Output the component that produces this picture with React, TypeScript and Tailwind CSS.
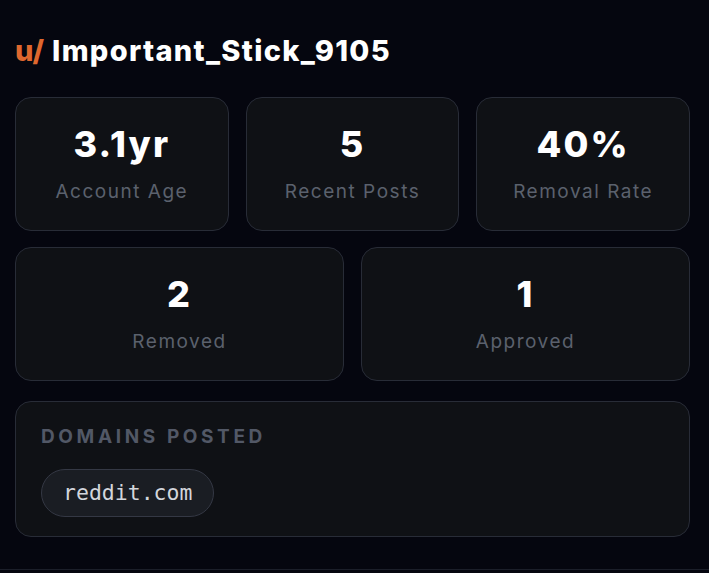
const stats = [
  { value: '3.1yr', label: 'Account Age' },
  { value: '5', label: 'Recent Posts' },
  { value: '40%', label: 'Removal Rate' },
];

const outcomes = [
  { value: '2', label: 'Removed' },
  { value: '1', label: 'Approved' },
];

function StatCard({ value, label }: { value: string; label: string }) {
  return (
    <div className="h-[134px] rounded-2xl border border-[#282c37] bg-[#0f1115] flex flex-col items-center justify-center">
      <p className="text-[36px] leading-[40px] font-extrabold tracking-[0.06em] text-white">{value}</p>
      <p className="mt-4 text-[19px] leading-[24px] tracking-[0.08em] text-[#5b616d]">{label}</p>
    </div>
  );
}

export default function App() {
  return (
    <div
      className="min-h-[573px] bg-[#05060f]"
      style={{ fontFamily: 'Inter, "Noto Sans", sans-serif' }}
    >
      <div className="w-[709px] pl-[15px] pr-[19px] pt-[33px] pb-[32px] border-b border-[#1b1e29]">
        {/* Username */}
        <h1 className="flex items-center gap-[8px] text-[29px] leading-[36px] font-extrabold">
          <span className="text-[#df672e]">u/</span>
          <span className="text-white tracking-[0.045em]">Important_Stick_9105</span>
        </h1>

        {/* Stats */}
        <div className="mt-[28px] grid grid-cols-3 gap-[17px]">
          {stats.map(s => (
            <StatCard key={s.label} {...s} />
          ))}
        </div>
        <div className="mt-4 grid grid-cols-2 gap-[17px]">
          {outcomes.map(s => (
            <StatCard key={s.label} {...s} />
          ))}
        </div>

        {/* Domains */}
        <div className="mt-5 h-[136px] rounded-2xl border border-[#282c37] bg-[#0f1115] px-[25px] pt-[23px]">
          <p className="text-[19px] leading-[24px] font-bold tracking-[0.19em] text-[#525866]">
            DOMAINS POSTED
          </p>
          <div className="mt-[20px] flex">
            <span
              className="h-[48px] px-[21px] flex items-center rounded-full border border-[#343844] bg-[#1a1d23] text-[21.5px] text-[#d3d6dc]"
              style={{ fontFamily: '"DejaVu Sans Mono", "Liberation Mono", monospace' }}
            >
              reddit.com
            </span>
          </div>
        </div>
      </div>
    </div>
  );
}
